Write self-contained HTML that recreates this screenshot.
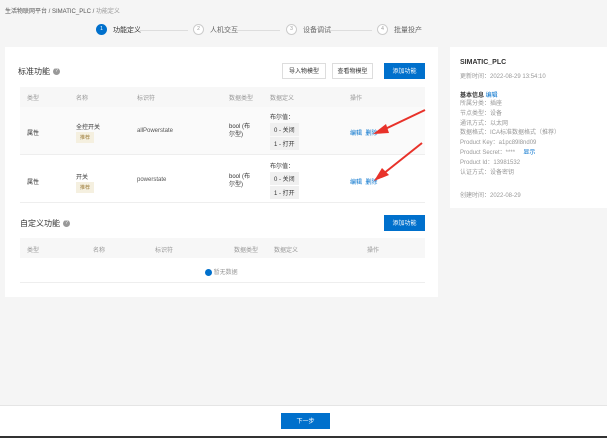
<!DOCTYPE html><html><head><meta charset="utf-8"><style>
*{margin:0;padding:0;box-sizing:border-box}
body{width:607px;height:438px;background:#f5f5f5;font-family:"Liberation Sans","Noto Sans CJK SC",sans-serif;font-size:6px;color:#333;position:relative;overflow:hidden}
.a{position:absolute}
.g{color:#999}
.btn{position:absolute;height:16px;font-size:6px;text-align:center;line-height:16px;border:1px solid #ddd;background:#fff;color:#333}
.bp{background:#0070cc;border-color:#0070cc;color:#fff}
.th{background:#f7f7f7}
.tag{background:#f0f0f0;padding:2px 4px}
.step{position:absolute;top:24px;font-size:7px;display:flex;align-items:center}
.c{width:11px;height:11px;border-radius:50%;border:1px solid #ccc;color:#999;font-size:5px;text-align:center;line-height:9px;margin-right:6px;background:#fff}
.ln{position:absolute;top:30px;height:1px;background:#ddd}
.q{display:inline-block;width:7px;height:7px;border-radius:50%;background:#999;color:#fff;font-size:5px;text-align:center;line-height:7px;vertical-align:middle;margin-left:3px}
</style></head><body>
<div class="a" style="left:5px;top:6px;font-size:6px;color:#555">生活物联网平台 / SIMATIC_PLC / <span class="g">功能定义</span></div>
<div class="step" style="left:96px"><div class="c" style="background:#0070cc;border-color:#0070cc;color:#fff">1</div>功能定义</div>
<div class="ln" style="left:140px;width:48px"></div>
<div class="step" style="left:193px;color:#666"><div class="c">2</div>人机交互</div>
<div class="ln" style="left:236px;width:44px"></div>
<div class="step" style="left:286px;color:#666"><div class="c">3</div>设备调试</div>
<div class="ln" style="left:330px;width:42px"></div>
<div class="step" style="left:377px;color:#666"><div class="c">4</div>批量投产</div>

<div class="a" style="left:5px;top:47px;width:433px;height:250px;background:#fff"></div>
<div class="a" style="left:18px;top:66px;font-size:8px;color:#333">标准功能<span class="q">?</span></div>
<div class="btn" style="left:282px;top:63px;width:44px">导入物模型</div>
<div class="btn" style="left:332px;top:63px;width:41px">查看物模型</div>
<div class="btn bp" style="left:384px;top:63px;width:41px">添加功能</div>
<div class="a th" style="left:20px;top:87px;width:405px;height:20px"></div>
<div class="a g" style="left:27px;top:93px">类型</div><div class="a g" style="left:76px;top:93px">名称</div><div class="a g" style="left:137px;top:93px">标识符</div><div class="a g" style="left:229px;top:93px">数据类型</div><div class="a g" style="left:270px;top:93px">数据定义</div><div class="a g" style="left:350px;top:93px">操作</div>
<div class="a" style="left:20px;top:107px;width:405px;height:48px;background:#fafafa;border-bottom:1px solid #eee"></div>
<div class="a" style="left:27px;top:128px">属性</div>
<div class="a" style="left:76px;top:122px">全控开关</div><div class="a tag" style="left:76px;top:132px;background:#f5f0e0;color:#a08040;font-size:5px">推荐</div>
<div class="a" style="left:137px;top:128px;color:#555">allPowerstate</div>
<div class="a" style="left:229px;top:123px;line-height:8px">bool (布<br>尔型)</div>
<div class="a" style="left:270px;top:112px">布尔值：</div>
<div class="a tag" style="left:270px;top:123px">0 - 关闭</div><div class="a tag" style="left:270px;top:137px">1 - 打开</div>
<div class="a" style="left:350px;top:128px;color:#0070cc">编辑 &nbsp;删除</div>
<div class="a" style="left:20px;top:155px;width:405px;height:48px;border-bottom:1px solid #eee"></div>
<div class="a" style="left:27px;top:177px">属性</div>
<div class="a" style="left:76px;top:172px">开关</div><div class="a tag" style="left:76px;top:182px;background:#f5f0e0;color:#a08040;font-size:5px">推荐</div>
<div class="a" style="left:137px;top:177px;color:#555">powerstate</div>
<div class="a" style="left:229px;top:173px;line-height:8px">bool (布<br>尔型)</div>
<div class="a" style="left:270px;top:161px">布尔值：</div>
<div class="a tag" style="left:270px;top:172px">0 - 关闭</div><div class="a tag" style="left:270px;top:186px">1 - 打开</div>
<div class="a" style="left:350px;top:177px;color:#0070cc">编辑 &nbsp;删除</div>

<div class="a" style="left:20px;top:218px;font-size:8px">自定义功能<span class="q">?</span></div>
<div class="btn bp" style="left:384px;top:215px;width:41px">添加功能</div>
<div class="a th" style="left:20px;top:238px;width:405px;height:20px"></div>
<div class="a g" style="left:27px;top:245px">类型</div><div class="a g" style="left:93px;top:245px">名称</div><div class="a g" style="left:155px;top:245px">标识符</div><div class="a g" style="left:234px;top:245px">数据类型</div><div class="a g" style="left:274px;top:245px">数据定义</div><div class="a g" style="left:367px;top:245px">操作</div>
<div class="a" style="left:20px;top:258px;width:405px;height:25px;border-bottom:1px solid #eee"></div>
<div class="a g" style="left:205px;top:267px"><span style="display:inline-block;width:7px;height:7px;border-radius:50%;background:#0070cc;vertical-align:middle"></span> 暂无数据</div>

<div class="a" style="left:450px;top:47px;width:157px;height:161px;background:#fff"></div>
<div class="a" style="left:460px;top:59px;font-size:7px;font-weight:bold">SIMATIC_PLC</div>
<div class="a g" style="left:460px;top:71px">更新时间：2022-08-29 13:54:10</div>
<div class="a" style="left:460px;top:90px;font-weight:bold">基本信息 <span style="color:#0070cc;font-weight:normal">编辑</span></div>
<div class="a g" style="left:460px;top:100px;line-height:9.8px">所属分类：插座<br>节点类型：设备<br>通讯方式：以太网<br>数据格式：ICA标准数据格式（推荐）<br>Product Key：a1pc89l8nd09<br>Product Secret：**** &nbsp; &nbsp; <span style="color:#0070cc">显示</span><br>Product Id：13981532<br>认证方式：设备密钥</div>
<div class="a g" style="left:460px;top:190px">创建时间：2022-08-29</div>

<div class="a" style="left:0;top:405px;width:607px;height:31px;background:#fff;border-top:1px solid #e5e5e5"></div>
<div class="btn bp" style="left:281px;top:413px;width:49px">下一步</div>
<div class="a" style="left:0;top:436px;width:607px;height:2px;background:#333"></div>

<svg class="a" style="left:0;top:0" width="607" height="438">
<g stroke="#e8322a" stroke-width="2" fill="#e8322a">
<line x1="425" y1="110" x2="383" y2="130"/><polygon points="373,134 386,124 389,133" stroke="none"/>
<line x1="422" y1="143" x2="383" y2="174"/><polygon points="374,181 382,168 389,175" stroke="none"/>
</g></svg>
</body></html>
